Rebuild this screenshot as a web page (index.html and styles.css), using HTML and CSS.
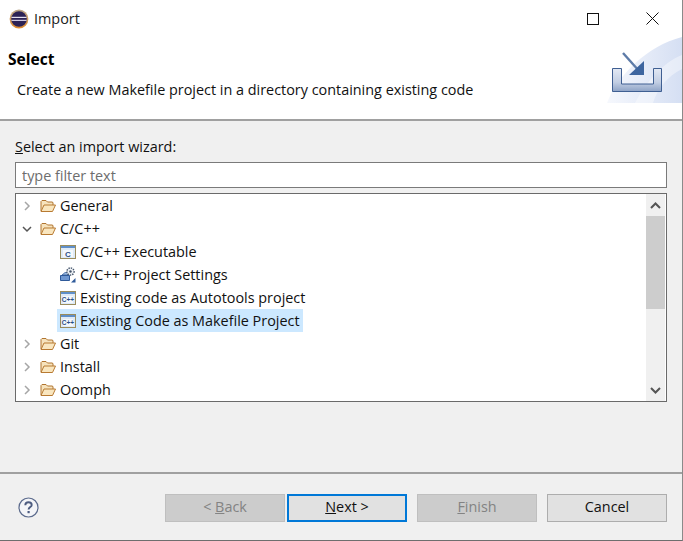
FILE: index.html
```html
<!DOCTYPE html>
<html lang="en">
<head>
    <meta charset="UTF-8">
    <title>Import</title>
    <link rel="stylesheet" href="styles.css">
</head>
<body>
    <div class="window">
        <div class="titlebar">
            <svg class="app-icon" width="20" height="20" viewBox="0 0 20 20">
                <defs>
                    <linearGradient id="rim" x1="0" y1="0" x2="0" y2="1">
                        <stop offset="0" stop-color="#b9a78c"/>
                        <stop offset="1" stop-color="#e08a2c"/>
                    </linearGradient>
                    <clipPath id="disc"><circle cx="10" cy="10" r="7.8"/></clipPath>
                </defs>
                <circle cx="10" cy="10" r="9.4" fill="url(#rim)"/>
                <circle cx="10" cy="10" r="7.8" fill="#2c2255"/>
                <g clip-path="url(#disc)">
                    <rect x="0" y="7.8" width="20" height="1.2" fill="#e4e0ee"/>
                    <rect x="0" y="10.8" width="20" height="1.2" fill="#cfc9e0"/>
                </g>
            </svg>
            <span class="title">Import</span>
            <div class="win-controls">
                <svg class="win-btn" width="12" height="12" viewBox="0 0 12 12">
                    <rect x="0.5" y="0.5" width="11" height="11" fill="none" stroke="#111"/>
                </svg>
                <svg class="win-btn" width="13" height="13" viewBox="0 0 13 13">
                    <path d="M0.5 0.5L12.5 12.5M12.5 0.5L0.5 12.5" fill="none" stroke="#111"/>
                </svg>
            </div>
        </div>

        <div class="banner">
            <div class="banner-text">
                <h1>Select</h1>
                <p>Create a new Makefile project in a directory containing existing code</p>
            </div>
            <svg class="banner-art" width="75" height="67" viewBox="0 0 75 67">
                <defs>
                    <linearGradient id="wash" x1="0" y1="0" x2="1" y2="0">
                        <stop offset="0" stop-color="#f6f8fd"/>
                        <stop offset="1" stop-color="#d5dff3"/>
                    </linearGradient>
                    <linearGradient id="tray" x1="0" y1="0" x2="0" y2="1">
                        <stop offset="0" stop-color="#e3e9f4"/>
                        <stop offset="0.6" stop-color="#c2cee3"/>
                        <stop offset="1" stop-color="#8ea3c6"/>
                    </linearGradient>
                </defs>
                <path d="M0 67C10 40 40 10 75 1V67Z" fill="url(#wash)"/>
                <path d="M28 67C38 48 56 26 75 19V33C60 40 50 54 46 67Z" fill="#fff" opacity="0.4"/>
                <path d="M5.5 32.5H14.5V48H46.5V32.5H54.5V55.5H5.5Z" fill="url(#tray)" stroke="#3f5f92"/>
                <path d="M16 17L33 36" stroke="#5d7ba8" stroke-width="2.4" fill="none"/>
                <path d="M37 25V39H22Z" fill="#3d659f"/>
            </svg>
        </div>

        <div class="content">
            <label class="filter-label" for="filter"><u>S</u>elect an import wizard:</label>
            <input class="filter" id="filter" type="text" placeholder="type filter text">

            <div class="tree">
                <ul class="tree-list">
                    <li class="row">
                        <svg class="twisty closed" width="8" height="10" viewBox="0 0 8 10"><path d="M2 1L6 5L2 9" fill="none" stroke="#a6a6a6" stroke-width="1.5"/></svg>
                        <svg class="folder" width="16" height="14"><use href="#folder-icon"/></svg>
                        <span>General</span>
                    </li>
                    <li class="row">
                        <svg class="twisty" width="10" height="8" viewBox="0 0 10 8"><path d="M1 2L5 6L9 2" fill="none" stroke="#555" stroke-width="1.5"/></svg>
                        <svg class="folder" width="16" height="14"><use href="#folder-icon"/></svg>
                        <span>C/C++</span>
                    </li>
                    <li class="row child">
                        <svg class="file" width="16" height="16" viewBox="0 0 16 16">
                            <use href="#file-frame"/>
                            <text x="8" y="12.5" class="file-letter">C</text>
                        </svg>
                        <span>C/C++ Executable</span>
                    </li>
                    <li class="row child">
                        <svg class="file" width="16" height="16" viewBox="0 0 16 16">
                            <path d="M0.5 8.5H9.5V13.5H0.5Z" fill="#6f97d0" stroke="#2f5a9a"/>
                            <path d="M2 8L5 5.5H8V8Z" fill="#9db9de" stroke="#2f5a9a" stroke-width="0.7"/>
                            <circle cx="10.5" cy="4.5" r="3.6" fill="#eef1f5" stroke="#44546a" stroke-width="1.4" stroke-dasharray="1.4 1"/>
                            <circle cx="10.5" cy="4.5" r="1.2" fill="#44546a"/>
                            <path d="M15.5 11V15.5H11Z" fill="#2f5a9a"/>
                        </svg>
                        <span>C/C++ Project Settings</span>
                    </li>
                    <li class="row child">
                        <svg class="file" width="16" height="16" viewBox="0 0 16 16">
                            <use href="#file-frame"/>
                            <text x="8" y="12" class="file-letter small">C++</text>
                        </svg>
                        <span>Existing code as Autotools project</span>
                    </li>
                    <li class="row child">
                        <div class="selected">
                            <svg class="file" width="16" height="16" viewBox="0 0 16 16">
                                <use href="#file-frame"/>
                                <text x="8" y="12" class="file-letter small">C++</text>
                            </svg>
                            <span>Existing Code as Makefile Project</span>
                        </div>
                    </li>
                    <li class="row">
                        <svg class="twisty closed" width="8" height="10" viewBox="0 0 8 10"><path d="M2 1L6 5L2 9" fill="none" stroke="#a6a6a6" stroke-width="1.5"/></svg>
                        <svg class="folder" width="16" height="14"><use href="#folder-icon"/></svg>
                        <span>Git</span>
                    </li>
                    <li class="row">
                        <svg class="twisty closed" width="8" height="10" viewBox="0 0 8 10"><path d="M2 1L6 5L2 9" fill="none" stroke="#a6a6a6" stroke-width="1.5"/></svg>
                        <svg class="folder" width="16" height="14"><use href="#folder-icon"/></svg>
                        <span>Install</span>
                    </li>
                    <li class="row">
                        <svg class="twisty closed" width="8" height="10" viewBox="0 0 8 10"><path d="M2 1L6 5L2 9" fill="none" stroke="#a6a6a6" stroke-width="1.5"/></svg>
                        <svg class="folder" width="16" height="14"><use href="#folder-icon"/></svg>
                        <span>Oomph</span>
                    </li>
                </ul>
                <div class="scrollbar">
                    <svg class="arrow" width="11" height="7" viewBox="0 0 11 7"><path d="M1 6L5.5 1.5L10 6" fill="none" stroke="#555" stroke-width="2"/></svg>
                    <div class="track"><div class="thumb"></div></div>
                    <svg class="arrow" width="11" height="7" viewBox="0 0 11 7"><path d="M1 1L5.5 5.5L10 1" fill="none" stroke="#555" stroke-width="2"/></svg>
                </div>
            </div>
        </div>

        <div class="footer">
            <svg class="help" width="21" height="21" viewBox="0 0 21 21">
                <circle cx="10.5" cy="10.5" r="9.5" fill="#f4f5f8" stroke="#5b6a8c" stroke-width="1.2"/>
                <path d="M7.3 8.2C7.3 6.2 8.8 5.2 10.5 5.2C12.3 5.2 13.7 6.3 13.7 7.9C13.7 10 10.6 10.2 10.6 12.6" fill="none" stroke="#4d5c80" stroke-width="1.9"/>
                <rect x="9.5" y="14" width="2.2" height="2.2" fill="#4d5c80"/>
            </svg>
            <div class="buttons">
                <button class="btn" disabled>&lt; <u>B</u>ack</button>
                <button class="btn default"><u>N</u>ext &gt;</button>
                <button class="btn finish" disabled><u>F</u>inish</button>
                <button class="btn cancel">Cancel</button>
            </div>
        </div>
    </div>

    <svg class="icon-defs" width="0" height="0">
        <symbol id="folder-icon" viewBox="0 0 16 14">
            <path d="M1 12V2.5L2 1.5H6L7.5 3H12.5L13 4V6" fill="#f6e3bd" stroke="#b0742f"/>
            <path d="M1 12.5L4 6H15.5L12.5 12.5Z" fill="#f9e6bf" stroke="#b87a32"/>
        </symbol>
        <g id="file-frame">
            <rect x="0.5" y="1.5" width="15" height="13" fill="#dfeaf6" stroke="#9a8c5c"/>
            <rect x="1" y="2" width="14" height="2" fill="#5f8fc9"/>
            <rect x="3" y="6" width="10" height="7" fill="#f4f8fc"/>
        </g>
    </svg>
</body>
</html>
```

FILE: styles.css
```css
* {
    margin: 0;
    padding: 0;
    box-sizing: border-box;
}

body {
    font-family: 'Open Sans', 'Noto Sans', sans-serif;
    font-size: 14.4px;
    color: #111;
    background: #f0f0f0;
    overflow: hidden;
}

.window {
    width: 683px;
    height: 541px;
    display: flex;
    flex-direction: column;
    border-right: 1px solid #8a8a8a;
    border-bottom: 1px solid #6e6e6e;
}

.titlebar {
    height: 37px;
    background: white;
    display: flex;
    align-items: center;
    padding-left: 9px;
    flex-shrink: 0;
}

.title {
    margin-left: 5px;
    color: #222;
}

.win-controls {
    margin-left: auto;
    display: flex;
    align-items: center;
    gap: 47px;
    padding-right: 23px;
}

.banner {
    height: 84px;
    background: white;
    border-bottom: 2px solid #a0a0a0;
    display: flex;
    justify-content: space-between;
    align-items: flex-end;
    flex-shrink: 0;
}

.banner-text {
    align-self: flex-start;
    padding: 12px 0 0 8px;
}

.banner-text h1 {
    font-size: 15.6px;
    font-weight: 700;
    line-height: 20px;
    color: #000;
}

.banner-text p {
    margin: 11px 0 0 9px;
    line-height: 20px;
}

.banner-art {
    flex-shrink: 0;
    margin-bottom: 16px;
}

.content {
    padding: 16px 15px 0;
    flex: 1;
    display: flex;
    flex-direction: column;
}

.filter-label {
    line-height: 20px;
    height: 25px;
    display: block;
}

.filter {
    height: 26px;
    width: 100%;
    border: 1px solid #7a7a7a;
    background: white;
    padding: 0 6px;
    font-family: inherit;
    font-size: 14.4px;
    margin-bottom: 5px;
}

.filter::placeholder {
    color: #6d6d6d;
    opacity: 1;
}

.tree {
    height: 209px;
    border: 1px solid #6a6a6a;
    background: white;
    display: flex;
}

.tree-list {
    list-style: none;
    flex: 1;
}

.row {
    height: 23px;
    display: flex;
    align-items: center;
}

.twisty {
    margin-left: 6px;
    width: 10px;
}

.folder {
    margin-left: 8px;
    margin-right: 4px;
}

.row.child {
    padding-left: 41px;
}

.file {
    margin-right: 4px;
    flex-shrink: 0;
}

.file-letter {
    font-family: 'Liberation Sans', sans-serif;
    font-size: 8px;
    font-weight: 700;
    text-anchor: middle;
    fill: #2d4f86;
}

.file-letter.small {
    font-size: 6.5px;
}

.row.child > .file {
    margin-left: 3px;
}

.selected {
    background: #cce8ff;
    height: 23px;
    display: flex;
    align-items: center;
    padding: 0 3px;
}

.scrollbar {
    width: 19px;
    margin-right: 1px;
    background: #f0f0f0;
    display: flex;
    flex-direction: column;
    align-items: center;
}

.arrow {
    flex-shrink: 0;
    margin: 8px 0 7px;
}

.track {
    flex: 1;
    width: 100%;
}

.thumb {
    height: 93px;
    background: #cdcdcd;
}

.footer {
    height: 68px;
    flex-shrink: 0;
    border-top: 2px solid #a0a0a0;
    display: flex;
    justify-content: space-between;
    align-items: flex-start;
    padding: 20px 15px 0 18px;
}

.help {
    margin-top: 3px;
}

.buttons {
    display: flex;
}

.btn {
    width: 120px;
    height: 28px;
    font-family: inherit;
    font-size: 14.4px;
    line-height: 20px;
    padding-bottom: 2px;
    background: #e1e1e1;
    border: 1px solid #adadad;
    color: #111;
    margin-left: 10px;
}

.btn:first-child {
    margin-right: -8px;
}

.btn:disabled {
    background: #cccccc;
    border-color: #bfbfbf;
    color: #838383;
}

.btn.default {
    border: 2px solid #0078d7;
}

.icon-defs {
    position: absolute;
}
```
